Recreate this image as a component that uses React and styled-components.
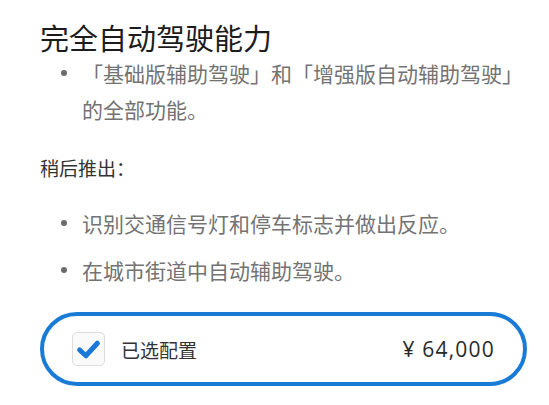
import React from 'react';
import styled, { createGlobalStyle } from 'styled-components';

const GlobalStyle = createGlobalStyle`
  body {
    margin: 0;
    background: #fff;
    font-family: "Noto Sans CJK SC", "Noto Sans", sans-serif;
  }
`;

const Page = styled.div`
  width: 549px;
  height: 405px;
  box-sizing: border-box;
  padding: 20px 22px 0 40px;
  overflow: hidden;
`;

const Title = styled.h1`
  margin: 0;
  font-size: 29px;
  line-height: 35px;
  font-weight: 400;
  color: #1c1c1c;
`;

const List = styled.ul`
  list-style: none;
  margin: ${(p) => p.$top || 0}px 0 0;
  padding: 0;
  display: flex;
  flex-direction: column;
  gap: ${(p) => p.$gap || 0}px;
`;

const Item = styled.li`
  position: relative;
  padding-left: 42px;
  font-size: 21px;
  line-height: ${(p) => p.$lh || 28}px;
  color: #737373;

  &::before {
    content: '';
    position: absolute;
    left: 21px;
    top: ${(p) => (p.$lh || 28) / 2 - 3}px;
    width: 6px;
    height: 6px;
    border-radius: 50%;
    background: #6a6a6a;
  }
`;

const Later = styled.p`
  margin: 27px 0 0;
  font-size: 19px;
  line-height: 28px;
  color: #333;
`;

const Option = styled.label`
  margin-top: 28px;
  width: 487px;
  height: 74px;
  box-sizing: border-box;
  border: 4px solid #1a7bd6;
  border-radius: 37px;
  display: flex;
  align-items: center;
  padding: 0 28px;
  gap: 16px;
`;

const Box = styled.span`
  width: 33px;
  height: 34px;
  box-sizing: border-box;
  border: 1.5px solid #dcdcdc;
  border-radius: 5px;
  background: #fafafa;
  display: flex;
  align-items: center;
  justify-content: center;
`;

const OptionName = styled.span`
  flex: 1;
  font-size: 19px;
  color: #333;
`;

const Price = styled.span`
  font-family: "Open Sans", "Noto Sans CJK SC", sans-serif;
  font-size: 21px;
  letter-spacing: 1.2px;
  color: #2a2a2a;
`;

const Check = () => (
  <svg width="25" height="21" viewBox="0 0 24 20">
    <path d="M3.5 10.5 L9.5 16 L20.5 4" fill="none" stroke="#1a78d8" strokeWidth="4.8" strokeLinecap="round" strokeLinejoin="round" />
  </svg>
);

export default function App() {
  return (
    <Page>
      <GlobalStyle />
      <Title>完全自动驾驶能力</Title>
      <List>
        <Item $lh={36}>「基础版辅助驾驶」和「增强版自动辅助驾驶」的全部功能。</Item>
      </List>
      <Later>稍后推出：</Later>
      <List $top={27} $gap={19}>
        <Item>识别交通信号灯和停车标志并做出反应。</Item>
        <Item>在城市街道中自动辅助驾驶。</Item>
      </List>
      <Option>
        <Box><Check /></Box>
        <OptionName>已选配置</OptionName>
        <Price>¥ 64,000</Price>
      </Option>
    </Page>
  );
}
